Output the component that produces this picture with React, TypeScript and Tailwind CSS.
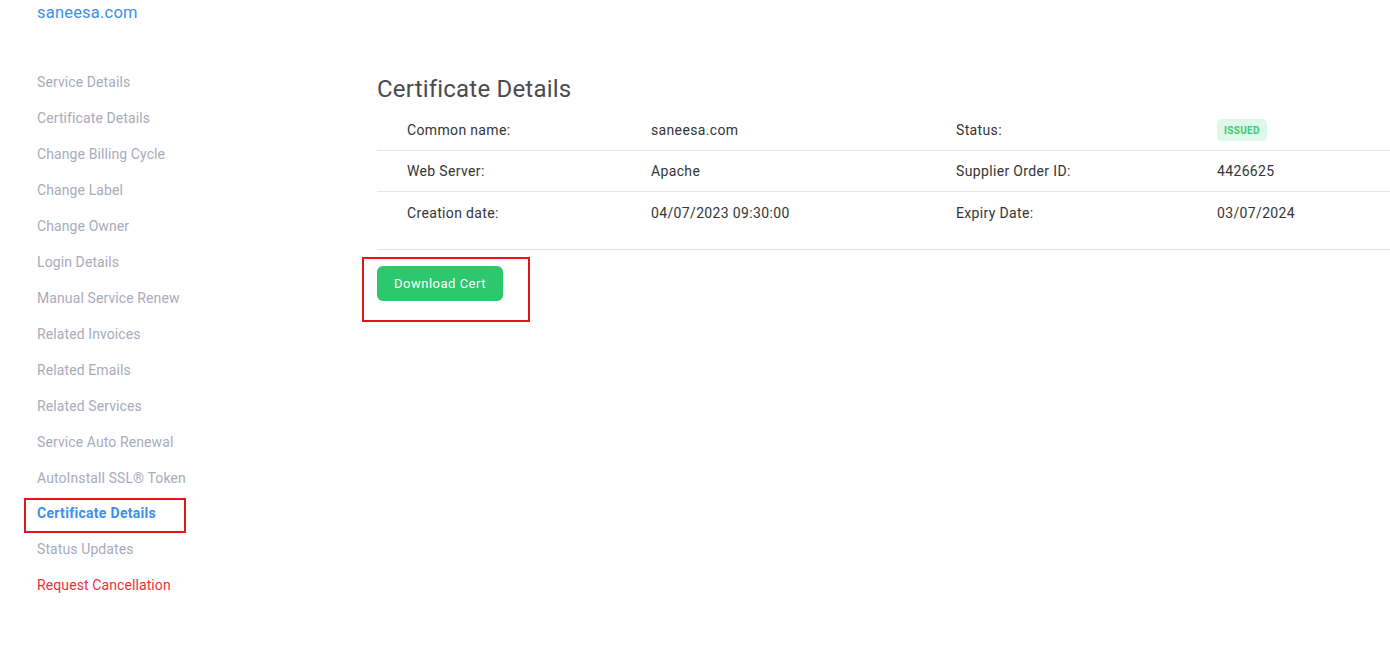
const sideLinks = [
  'Service Details',
  'Certificate Details',
  'Change Billing Cycle',
  'Change Label',
  'Change Owner',
  'Login Details',
  'Manual Service Renew',
  'Related Invoices',
  'Related Emails',
  'Related Services',
  'Service Auto Renewal',
  'AutoInstall SSL® Token',
];

const rows = [
  { l1: 'Common name:', v1: 'saneesa.com', l2: 'Status:', v2: 'badge' },
  { l1: 'Web Server:', v1: 'Apache', l2: 'Supplier Order ID:', v2: '4426625' },
  { l1: 'Creation date:', v1: '04/07/2023 09:30:00', l2: 'Expiry Date:', v2: '03/07/2024' },
];

export default function App() {
  return (
    <div
      className="w-[1390px] h-[656px] bg-white overflow-hidden flex text-[14px]"
      style={{ fontFamily: 'Roboto, "Noto Sans", sans-serif' }}
    >
      <aside className="w-[377px] shrink-0 pl-[37px] pt-[1px]">
        <div className="text-[16.5px] leading-[24px] tracking-[0.2px] text-[#3d8fe8]">saneesa.com</div>
        <nav className="mt-[47px] flex flex-col gap-4 tracking-[0.1px]">
          {sideLinks.map((s) => (
            <a key={s} className="leading-[20px] text-[#a9abbb]">
              {s}
            </a>
          ))}
          <div className="-ml-[13px] -mt-[6px] -mb-[10px] w-[162px] h-[35px] border-2 border-[#e8141a] pl-[11px] pt-[3px]">
            <a className="block font-bold text-[#3d8fe8] leading-[20px] tracking-[0.3px]">Certificate Details</a>
          </div>
          <a className="leading-[20px] text-[#a9abbb]">Status Updates</a>
          <a className="leading-[20px] text-[#f0303b]">Request Cancellation</a>
        </nav>
      </aside>

      <main className="flex-1 pt-[74px]">
        <h1 className="text-[24px] leading-[30px] text-[#4a4b4d] mb-[6px] tracking-[0.2px]">Certificate Details</h1>
        <div className="border-b border-[#e4e4e6] pb-[15px] text-[#343537] tracking-[0.35px]">
          {rows.map((r, i) => (
            <div
              key={r.l1}
              className={`grid grid-cols-[244px_305px_261px_1fr] items-center ${i < 2 ? 'h-[41px] border-b border-[#e6e6e8]' : 'h-[42px]'}`}
            >
              <div className="pl-[30px]">{r.l1}</div>
              <div className="pl-[30px]">{r.v1}</div>
              <div className="pl-[30px]">{r.l2}</div>
              <div className="pl-[30px]">
                {r.v2 === 'badge' ? (
                  <span className="inline-flex items-center h-[22px] px-[7px] rounded-[5px] bg-[#dff7e8] text-[#3ccb70] text-[10px] font-bold tracking-[0.3px]">
                    ISSUED
                  </span>
                ) : (
                  r.v2
                )}
              </div>
            </div>
          ))}
        </div>
        <div className="-ml-[15px] mt-[7px] w-[168px] h-[65px] border-2 border-[#e8141a] pl-[13px] pt-[7px]">
          <button className="h-[35px] w-[126px] rounded-[6px] bg-[#2dc76d] text-white text-[13px] tracking-[0.5px]">
            Download Cert
          </button>
        </div>
      </main>
    </div>
  );
}
